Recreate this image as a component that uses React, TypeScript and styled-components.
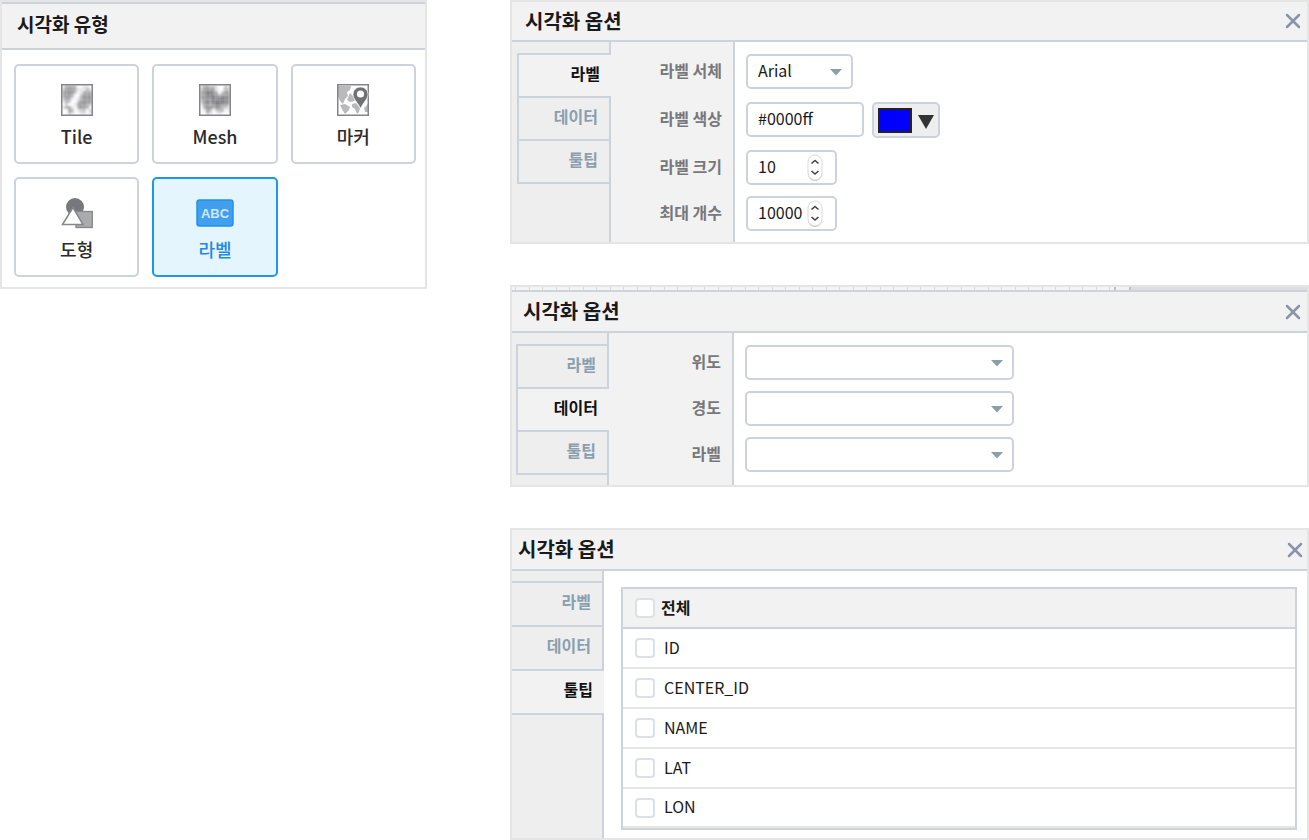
import React, { useState } from "react";
import styled, { createGlobalStyle, css } from "styled-components";

const line = "#ccd3da";
const frame = "#e5e5e5";
const headBg = "#f2f2f2";
const railBg = "#eeeeee";
const accent = "#1e96f0";
const muted = "#8a9fae";

const GlobalStyle = createGlobalStyle`
  *, *::before, *::after { box-sizing: border-box; }
  body { margin: 0; background: #fff; }
  body, button, input, select {
    font-family: "Noto Sans CJK KR", "Noto Sans", sans-serif;
    font-size: 16px;
    color: #1a1a1a;
  }
`;

const Page = styled.main`
  display: grid;
  grid-template-columns: minmax(0, 427fr) minmax(0, 799fr);
  column-gap: 83px;
  align-items: start;
`;

const Stack = styled.div`
  display: flex;
  flex-direction: column;
  gap: 41px;
`;

const Panel = styled.section`
  border: 2px solid ${frame};
  background: #fff;
`;

const PanelHeader = styled.header<{ $height: number; $inset: number; $end?: number; $ruled?: boolean }>`
  display: flex;
  align-items: center;
  justify-content: space-between;
  height: ${(p) => p.$height}px;
  padding: 0 ${(p) => p.$end ?? 6}px 0 ${(p) => p.$inset}px;
  background: ${headBg};
  border-bottom: 2px solid ${line};
  ${(p) => p.$ruled && css`border-top: 2px solid ${line};`}
`;

const Title = styled.h2<{ $size?: number }>`
  margin: 0;
  padding-bottom: 1px;
  font-size: ${(p) => p.$size ?? 20}px;
  line-height: 36px;
  font-weight: 700;
`;

const TypeTitle = styled(Title)`
  padding-bottom: 4px;
`;

const CloseButton = styled.button`
  display: grid;
  place-items: center;
  width: 16px;
  height: 16px;
  padding: 0;
  border: 0;
  background: none;
  cursor: pointer;
`;

const TypeGrid = styled.div`
  display: grid;
  grid-template-columns: repeat(3, minmax(0, 1fr));
  gap: 13px;
  padding: 14px 9px 10px 12px;
`;

const TypeCard = styled.button`
  display: flex;
  flex-direction: column;
  align-items: center;
  gap: 8px;
  height: 100px;
  padding: 18px 0 0;
  border: 2px solid ${line};
  border-radius: 5px;
  background: #fff;
  font-size: 18px;
  line-height: 24px;
  font-weight: 500;
  color: #2b2b2b;
  cursor: pointer;

  &[aria-pressed="true"] {
    border-color: ${accent};
    background: #e4f5fe;
    color: #2389e6;
  }
`;

const IconBox = styled.span`
  display: grid;
  place-items: center;
  height: 32px;
`;

const Body = styled.div`
  display: flex;
  align-items: stretch;
`;

const TabRail = styled.div<{ $width: number; $inset: number; $top: number }>`
  display: flex;
  flex-direction: column;
  flex: none;
  width: ${(p) => p.$width}px;
  padding-left: ${(p) => p.$inset}px;
  background: ${railBg};

  &::before {
    content: "";
    height: ${(p) => p.$top}px;
    border-right: 2px solid ${line};
  }

  &::after {
    content: "";
    flex: 1;
    border-right: 2px solid ${line};
  }
`;

const Tab = styled.button<{ $height: number; $edge: boolean }>`
  height: ${(p) => p.$height}px;
  padding: 0 11px 6px 0;
  border: 0 solid ${line};
  border-top-width: 2px;
  border-right-width: 2px;
  border-left-width: ${(p) => (p.$edge ? 2 : 0)}px;
  background: transparent;
  text-align: right;
  font-weight: 700;
  color: ${muted};
  cursor: pointer;

  &:last-of-type {
    height: ${(p) => p.$height + 2}px;
    border-bottom-width: 2px;
  }

  &[aria-selected="true"] {
    border-right-width: 0;
    background: ${headBg};
    color: #111;
  }
`;

const Form = styled.form`
  display: flex;
  flex-direction: column;
  flex: 1;
  min-width: 0;
`;

const FieldRow = styled.div<{ $height: number }>`
  display: flex;
  height: ${(p) => p.$height}px;
`;

const FieldLabel = styled.label<{ $width: number }>`
  flex: none;
  width: ${(p) => p.$width}px;
  padding: 11px 11px 0 0;
  border-right: 2px solid ${line};
  background: ${headBg};
  text-align: right;
  font-weight: 700;
  line-height: 35px;
  color: #77787b;
`;

const FieldCell = styled.div`
  display: flex;
  flex: 1;
  align-items: flex-start;
  gap: 8px;
  min-width: 0;
  padding: 12px 11px 0;
`;

const Control = styled.div<{ $width: number }>`
  position: relative;
  width: ${(p) => p.$width}px;
  max-width: 100%;
`;

const fieldBox = css`
  display: block;
  width: 100%;
  height: 35px;
  padding: 0 10px 4px;
  border: 2px solid ${line};
  border-radius: 5px;
  background: #fff;
`;

const Select = styled.select`
  ${fieldBox}
  appearance: none;
`;

const Input = styled.input`
  ${fieldBox}
  appearance: textfield;

  &::-webkit-inner-spin-button,
  &::-webkit-outer-spin-button {
    appearance: none;
    margin: 0;
  }
`;

const SelectArrow = styled.svg`
  position: absolute;
  top: 15px;
  right: 11px;
  pointer-events: none;
`;

const Spinner = styled.svg`
  position: absolute;
  top: 4px;
  right: 14px;
  pointer-events: none;
`;

const SwatchButton = styled.button`
  display: flex;
  align-items: center;
  gap: 6px;
  width: 68px;
  height: 36px;
  padding: 0 4px;
  border: 2px solid ${line};
  border-radius: 5px;
  background: ${railBg};
  cursor: pointer;
`;

const Swatch = styled.span<{ $color: string }>`
  width: 34px;
  height: 25px;
  border: 2px solid #222;
  background: ${(p) => p.$color};
`;

const Ruler = styled.div`
  display: flex;
  height: 3px;
`;

const RulerScale = styled.div`
  flex: 1;
  background: repeating-linear-gradient(
    90deg, #f4f4f3 0 3px, #dddcd8 3px 4px, #f4f4f3 4px 17px, #dddcd8 17px 18px, #f4f4f3 18px 27px
  );
`;

const RulerMark = styled.div`
  width: 17px;
  border: solid #bfc3c8;
  border-width: 0 2px;
  background: ${headBg};
`;

const RulerRest = styled.div`
  width: 176px;
  background: #dcdddf;
`;

const TableWrap = styled.div`
  flex: 1;
  min-width: 0;
  padding: 16px 10px 8px 17px;
`;

const Table = styled.table`
  width: 100%;
  border: 2px solid ${line};
  border-collapse: separate;
  border-spacing: 0;
`;

const HeadCell = styled.th`
  height: 40px;
  padding: 0 12px;
  border-bottom: 2px solid ${line};
  background: ${headBg};
  text-align: left;
  font-weight: 700;
`;

const Cell = styled.td`
  height: 40px;
  padding: 0 12px;
  border-bottom: 2px solid ${frame};

  tr:last-child > & {
    height: 39px;
  }
`;

const CheckLabel = styled.label<{ $gap: number }>`
  display: flex;
  align-items: center;
  gap: ${(p) => p.$gap}px;
  line-height: 24px;
`;

const CheckText = styled.span`
  padding-bottom: 3px;
`;

const Checkbox = styled.input`
  appearance: none;
  width: 20px;
  height: 20px;
  margin: 0;
  border: 2px solid #dce1e6;
  border-radius: 4px;
  background: #fff;

  &:checked {
    border-color: ${accent};
    background: ${accent};
  }
`;

/* Shade of each block of the mosaic world maps: 0 is white, 5 is darkest. */
const tileBlocks = [
  "1333200110",
  "2444311131",
  "3444201333",
  "3443003444",
  "2431013444",
  "1320024444",
  "0200144432",
  "1331034330",
  "0043012202",
  "0021001101",
];
const meshBlocks = [
  "1332210021",
  "2444410032",
  "3455430243",
  "3455543444",
  "3444545554",
  "2454555554",
  "1443455443",
  "0344344221",
  "0143023301",
  "0021001000",
];
const shades = ["#fcfcfc", "#e4e4e5", "#c8c8ca", "#b0b0b2", "#9d9da0", "#858589"];

function MosaicIcon({ id, blocks }: { id: string; blocks: string[] }) {
  return (
    <svg width="32" height="32" viewBox="0 0 32 32" aria-hidden="true">
      <defs>
        <filter id={id}>
          <feGaussianBlur stdDeviation="0.9" />
        </filter>
      </defs>
      <g filter={`url(#${id})`}>
        {blocks.map((row, y) =>
          row.split("").map((n, x) => (
            <rect key={`${x}-${y}`} x={1 + x * 3} y={1 + y * 3} width="3" height="3" fill={shades[Number(n)]} />
          ))
        )}
      </g>
      <path
        d="M6 1 V31 M11 1 V31 M16 1 V31 M21 1 V31 M26 1 V31 M1 6 H31 M1 11 H31 M1 16 H31 M1 21 H31 M1 26 H31"
        stroke="#fff"
        strokeOpacity="0.15"
      />
      <rect x="0.75" y="0.75" width="30.5" height="30.5" fill="none" stroke="#858589" strokeWidth="1.5" />
    </svg>
  );
}

function MarkerIcon() {
  return (
    <svg width="32" height="32" viewBox="0 0 32 32" aria-hidden="true">
      <rect width="32" height="32" fill="#fff" />
      <g fill="#b9b9bb">
        <path d="M1 2 L14 2 L13 6 L10 8 L11 12 L8 15 L6 20 L3 17 L1 12 Z" />
        <path d="M13 9 L16 12 L18 17 L13 18 L10 16 Z" />
        <path d="M3 21 L8 20 L13 23 L12 26 L8 30 L6 27 Z" />
        <path d="M15 20 L19 19 L23 24 L22 28 L20 30 L18 25 L15 23 Z" />
        <path d="M27 24 L31 20 L31 28 L28 28 Z" />
      </g>
      <rect x="0.75" y="0.75" width="30.5" height="30.5" fill="none" stroke="#858589" strokeWidth="1.5" />
      <path
        d="M23.5 3 C19 3 16 6.500 16 10.500 C16 15 20.500 18 23.500 24.500 C26.500 18 31 15 31 10.500 C31 6.500 28 3 23.500 3 Z"
        fill="#707175"
        stroke="#fff"
        strokeWidth="0.700"
      />
      <circle cx="23.5" cy="10" r="3.600" fill="#fff" />
    </svg>
  );
}

function ShapesIcon() {
  return (
    <svg width="32" height="32" viewBox="0 0 32 32" aria-hidden="true">
      <circle cx="14" cy="10" r="9" fill="#77787c" />
      <rect x="15" y="14.500" width="16.300" height="16" fill="#a9abad" stroke="#85878a" strokeWidth="1.300" />
      <path d="M12 10.500 L22 27.500 L1.500 27.500 Z" fill="#fff" stroke="#85878a" strokeWidth="1.500" />
    </svg>
  );
}

function LabelIcon() {
  return (
    <svg width="38" height="28" viewBox="0 0 38 28" aria-hidden="true">
      <rect x="1" y="1" width="36" height="26" rx="2.500" fill="#429fee" stroke="#2291ec" strokeWidth="1.500" />
      <text
        x="19"
        y="19"
        textAnchor="middle"
        fontFamily="Liberation Sans, sans-serif"
        fontSize="13"
        fontWeight="700"
        fill="#cfe8fb"
      >
        ABC
      </text>
    </svg>
  );
}

function CloseIcon() {
  return (
    <svg width="16" height="16" viewBox="0 0 16 16" aria-hidden="true">
      <path d="M2 2 L14 14 M14 2 L2 14" stroke="#8795ab" strokeWidth="2.500" strokeLinecap="round" />
    </svg>
  );
}

function Close() {
  return (
    <CloseButton type="button" aria-label="닫기">
      <CloseIcon />
    </CloseButton>
  );
}

const tabNames = ["라벨", "데이터", "툴팁"];

interface TabsProps {
  selected: string;
  width: number;
  inset?: number;
  top?: number;
  height?: number;
}

function Tabs({ selected, width, inset = 0, top = 11, height = 43 }: TabsProps) {
  return (
    <TabRail role="tablist" $width={width} $inset={inset} $top={top}>
      {tabNames.map((name) => (
        <Tab key={name} type="button" role="tab" aria-selected={name === selected} $height={height} $edge={inset > 0}>
          {name}
        </Tab>
      ))}
    </TabRail>
  );
}

function Dropdown({ id, width, options }: { id: string; width: number; options: string[] }) {
  return (
    <Control $width={width}>
      <Select id={id}>
        {options.map((o) => (
          <option key={o}>{o}</option>
        ))}
      </Select>
      <SelectArrow width="12" height="7" viewBox="0 0 12 7" aria-hidden="true">
        <path d="M0 0 H12 L6 6.500 Z" fill="#8a9fae" />
      </SelectArrow>
    </Control>
  );
}

function NumberField({ id, value }: { id: string; value: number }) {
  return (
    <Control $width={91}>
      <Input id={id} type="number" defaultValue={value} />
      <Spinner width="16" height="28" viewBox="0 0 16 28" aria-hidden="true">
        <rect x="1" y="2" width="14" height="25" rx="7" fill="#c4c4c4" />
        <rect x="1" y="1" width="14" height="25" rx="7" fill="#fff" stroke="#d9d9d9" />
        <path d="M4.500 9.500 L8 6.500 L11.500 9.500 M4.500 17 L8 20 L11.500 17" fill="none" stroke="#444" strokeWidth="1.600" />
      </Spinner>
    </Control>
  );
}

const types = [
  { name: "Tile", icon: <MosaicIcon id="tile-soften" blocks={tileBlocks} /> },
  { name: "Mesh", icon: <MosaicIcon id="mesh-soften" blocks={meshBlocks} /> },
  { name: "마커", icon: <MarkerIcon /> },
  { name: "도형", icon: <ShapesIcon /> },
  { name: "라벨", icon: <LabelIcon /> },
];

function TypePanel() {
  const [selected, setSelected] = useState("라벨");
  return (
    <Panel>
      <PanelHeader $height={48} $inset={15} $ruled>
        <TypeTitle $size={19}>시각화 유형</TypeTitle>
      </PanelHeader>
      <TypeGrid>
        {types.map((t) => (
          <TypeCard key={t.name} type="button" aria-pressed={t.name === selected} onClick={() => setSelected(t.name)}>
            <IconBox>{t.icon}</IconBox>
            {t.name}
          </TypeCard>
        ))}
      </TypeGrid>
    </Panel>
  );
}

function LabelPanel() {
  return (
    <Panel>
      <PanelHeader $height={40} $inset={13}>
        <Title>시각화 옵션</Title>
        <Close />
      </PanelHeader>
      <Body>
        <Tabs selected="라벨" width={99} inset={5} />
        <Form>
          <FieldRow $height={48}>
            <FieldLabel $width={124} htmlFor="font">라벨 서체</FieldLabel>
            <FieldCell>
              <Dropdown id="font" width={107} options={["Arial"]} />
            </FieldCell>
          </FieldRow>
          <FieldRow $height={48}>
            <FieldLabel $width={124} htmlFor="color">라벨 색상</FieldLabel>
            <FieldCell>
              <Control $width={118}>
                <Input id="color" type="text" defaultValue="#0000ff" />
              </Control>
              <SwatchButton type="button" aria-label="색상 선택">
                <Swatch $color="#0000ff" />
                <svg width="16" height="18" viewBox="0 0 16 18" aria-hidden="true">
                  <path d="M0 4 H16 L8 18 Z" fill="#333" />
                </svg>
              </SwatchButton>
            </FieldCell>
          </FieldRow>
          <FieldRow $height={46}>
            <FieldLabel $width={124} htmlFor="size">라벨 크기</FieldLabel>
            <FieldCell>
              <NumberField id="size" value={10} />
            </FieldCell>
          </FieldRow>
          <FieldRow $height={58}>
            <FieldLabel $width={124} htmlFor="max">최대 개수</FieldLabel>
            <FieldCell>
              <NumberField id="max" value={10000} />
            </FieldCell>
          </FieldRow>
        </Form>
      </Body>
    </Panel>
  );
}

const dataFields = [
  { id: "lat", label: "위도", height: 46 },
  { id: "lon", label: "경도", height: 46 },
  { id: "text", label: "라벨", height: 60 },
];

function DataPanel() {
  return (
    <Panel>
      <Ruler>
        <RulerScale />
        <RulerMark />
        <RulerRest />
      </Ruler>
      <PanelHeader $height={43} $inset={11} $ruled>
        <Title>시각화 옵션</Title>
        <Close />
      </PanelHeader>
      <Body>
        <Tabs selected="데이터" width={97} inset={4} />
        <Form>
          {dataFields.map((f) => (
            <FieldRow key={f.id} $height={f.height}>
              <FieldLabel $width={125} htmlFor={f.id}>{f.label}</FieldLabel>
              <FieldCell>
                <Dropdown id={f.id} width={269} options={[""]} />
              </FieldCell>
            </FieldRow>
          ))}
        </Form>
      </Body>
    </Panel>
  );
}

const columns = ["ID", "CENTER_ID", "NAME", "LAT", "LON"];

function TooltipPanel() {
  return (
    <Panel>
      <PanelHeader $height={41} $inset={6} $end={4}>
        <Title>시각화 옵션</Title>
        <Close />
      </PanelHeader>
      <Body>
        <Tabs selected="툴팁" width={92} top={10} height={44} />
        <TableWrap>
          <Table>
            <thead>
              <tr>
                <HeadCell scope="col">
                  <CheckLabel $gap={6}>
                    <Checkbox type="checkbox" />
                    <CheckText>전체</CheckText>
                  </CheckLabel>
                </HeadCell>
              </tr>
            </thead>
            <tbody>
              {columns.map((c) => (
                <tr key={c}>
                  <Cell>
                    <CheckLabel $gap={9}>
                      <Checkbox type="checkbox" />
                      <CheckText>{c}</CheckText>
                    </CheckLabel>
                  </Cell>
                </tr>
              ))}
            </tbody>
          </Table>
        </TableWrap>
      </Body>
    </Panel>
  );
}

export default function App() {
  return (
    <>
      <GlobalStyle />
      <Page>
        <TypePanel />
        <Stack>
          <LabelPanel />
          <DataPanel />
          <TooltipPanel />
        </Stack>
      </Page>
    </>
  );
}
